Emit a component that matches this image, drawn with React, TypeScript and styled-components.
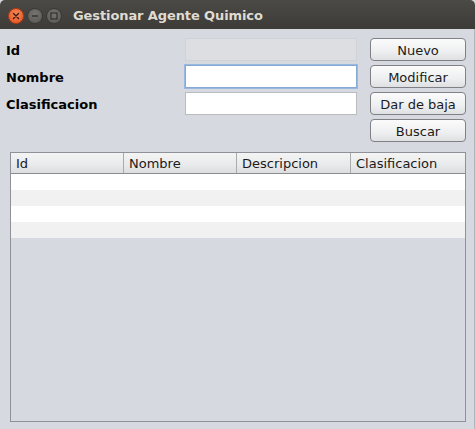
import React from "react";
import styled, { createGlobalStyle } from "styled-components";

const Global = createGlobalStyle`
  html, body { margin: 0; padding: 0; background: #d6d9df; }
  * { box-sizing: border-box; }
`;

const Window = styled.div`
  width: 475px;
  height: 429px;
  display: flex;
  flex-direction: column;
  background: #d6d9df;
  font-family: "DejaVu Sans", sans-serif;
  overflow: hidden;
`;

const TitleBar = styled.div`
  height: 29px;
  flex: none;
  display: flex;
  align-items: center;
  padding-left: 8px;
  background: linear-gradient(#4b4a45, #3c3b37);
  border-radius: 5px 5px 0 0;
`;

const Controls = styled.div`
  display: flex;
  gap: 3px;
  margin-top: 2px;
`;

const CircleBtn = styled.div<{ $close?: boolean }>`
  width: 16px;
  height: 16px;
  border-radius: 50%;
  display: flex;
  align-items: center;
  justify-content: center;
  background: ${(p) =>
    p.$close
      ? "radial-gradient(circle at 50% 35%, #f5875a, #e0511d)"
      : "radial-gradient(circle at 50% 35%, #75746f, #56554f)"};
  border: 1px solid ${(p) => (p.$close ? "#b63c12" : "#3a3935")};
`;

const Title = styled.div`
  margin-left: 11px;
  margin-top: 1px;
  color: #dfdbd2;
  font-family: "DejaVu Sans", sans-serif;
  font-weight: bold;
  font-size: 13px;
  letter-spacing: -0.1px;
`;

const Content = styled.div`
  flex: 1;
  display: flex;
  flex-direction: column;
  padding: 9px 0 7px 0;
  border-right: 1px solid #b2b5bb;
`;

const Form = styled.div`
  display: grid;
  grid-template-columns: 166px 172px 96px;
  grid-template-rows: repeat(4, 23px);
  column-gap: 13px;
  row-gap: 4px;
  padding-left: 6px;
`;

const Label = styled.div<{ $row: number }>`
  grid-column: 1;
  grid-row: ${(p) => p.$row};
  align-self: center;
  font-weight: bold;
  font-size: 13px;
  color: #000;
  margin-top: 1px;
`;

const Field = styled.div<{ $row: number; $disabled?: boolean; $focused?: boolean }>`
  grid-column: 2;
  grid-row: ${(p) => p.$row};
  background: ${(p) => (p.$disabled ? "#dcdee2" : "#ffffff")};
  border: 1px solid ${(p) => (p.$disabled ? "#d0d2d6" : p.$focused ? "#86a9d6" : "#b9bbbf")};
  box-shadow: ${(p) => (p.$focused ? "0 0 0 1px #9ab9e0" : "none")};
`;

const Button = styled.div<{ $row: number }>`
  grid-column: 3;
  grid-row: ${(p) => p.$row};
  display: flex;
  align-items: center;
  justify-content: center;
  border: 1px solid #7f8187;
  border-radius: 4px;
  background: linear-gradient(#fbfbfb, #eeeff0 60%, #dfe0e2);
  font-size: 13px;
  color: #1b1b1b;
  padding-top: 1px;
`;

const Table = styled.div`
  margin: 10px 0 0 10px;
  width: 456px;
  flex: 1;
  border: 1px solid #8e9198;
  display: flex;
  flex-direction: column;
`;

const Header = styled.div`
  display: grid;
  grid-template-columns: 113px 113px 114px 1fr;
  height: 21px;
  border-bottom: 1px solid #8a8c90;
  background: linear-gradient(#f4f4f5, #e9eaeb 60%, #dcdde0);
`;

const HeaderCell = styled.div<{ $last?: boolean }>`
  display: flex;
  align-items: center;
  padding-left: 5px;
  font-size: 13px;
  color: #1a1a1a;
  border-right: ${(p) => (p.$last ? "none" : "1px solid #a9abaf")};
`;

const Row = styled.div<{ $alt?: boolean }>`
  height: 16px;
  background: ${(p) => (p.$alt ? "#f1f1f1" : "#ffffff")};
`;

function Close() {
  return (
    <svg width="8" height="8" viewBox="0 0 8 8">
      <path d="M1.5 1.5 L6.5 6.5 M6.5 1.5 L1.5 6.5" stroke="#3a1a0c" strokeWidth="1.4" strokeLinecap="round" />
    </svg>
  );
}
function Min() {
  return (
    <svg width="8" height="8" viewBox="0 0 8 8">
      <path d="M1 4 H7" stroke="#32312d" strokeWidth="1.4" />
    </svg>
  );
}
function Max() {
  return (
    <svg width="8" height="8" viewBox="0 0 8 8">
      <rect x="1" y="1" width="6" height="6" fill="none" stroke="#32312d" strokeWidth="1.2" />
    </svg>
  );
}

export default function App() {
  return (
    <>
      <Global />
      <Window>
        <TitleBar>
          <Controls>
            <CircleBtn $close><Close /></CircleBtn>
            <CircleBtn><Min /></CircleBtn>
            <CircleBtn><Max /></CircleBtn>
          </Controls>
          <Title>Gestionar Agente Quimico</Title>
        </TitleBar>
        <Content>
          <Form>
            <Label $row={1}>Id</Label>
            <Label $row={2}>Nombre</Label>
            <Label $row={3}>Clasificacion</Label>
            <Field $row={1} $disabled />
            <Field $row={2} $focused />
            <Field $row={3} />
            <Button $row={1}>Nuevo</Button>
            <Button $row={2}>Modificar</Button>
            <Button $row={3}>Dar de baja</Button>
            <Button $row={4}>Buscar</Button>
          </Form>
          <Table>
            <Header>
              <HeaderCell>Id</HeaderCell>
              <HeaderCell>Nombre</HeaderCell>
              <HeaderCell>Descripcion</HeaderCell>
              <HeaderCell $last>Clasificacion</HeaderCell>
            </Header>
            <Row />
            <Row $alt />
            <Row />
            <Row $alt />
          </Table>
        </Content>
      </Window>
    </>
  );
}
